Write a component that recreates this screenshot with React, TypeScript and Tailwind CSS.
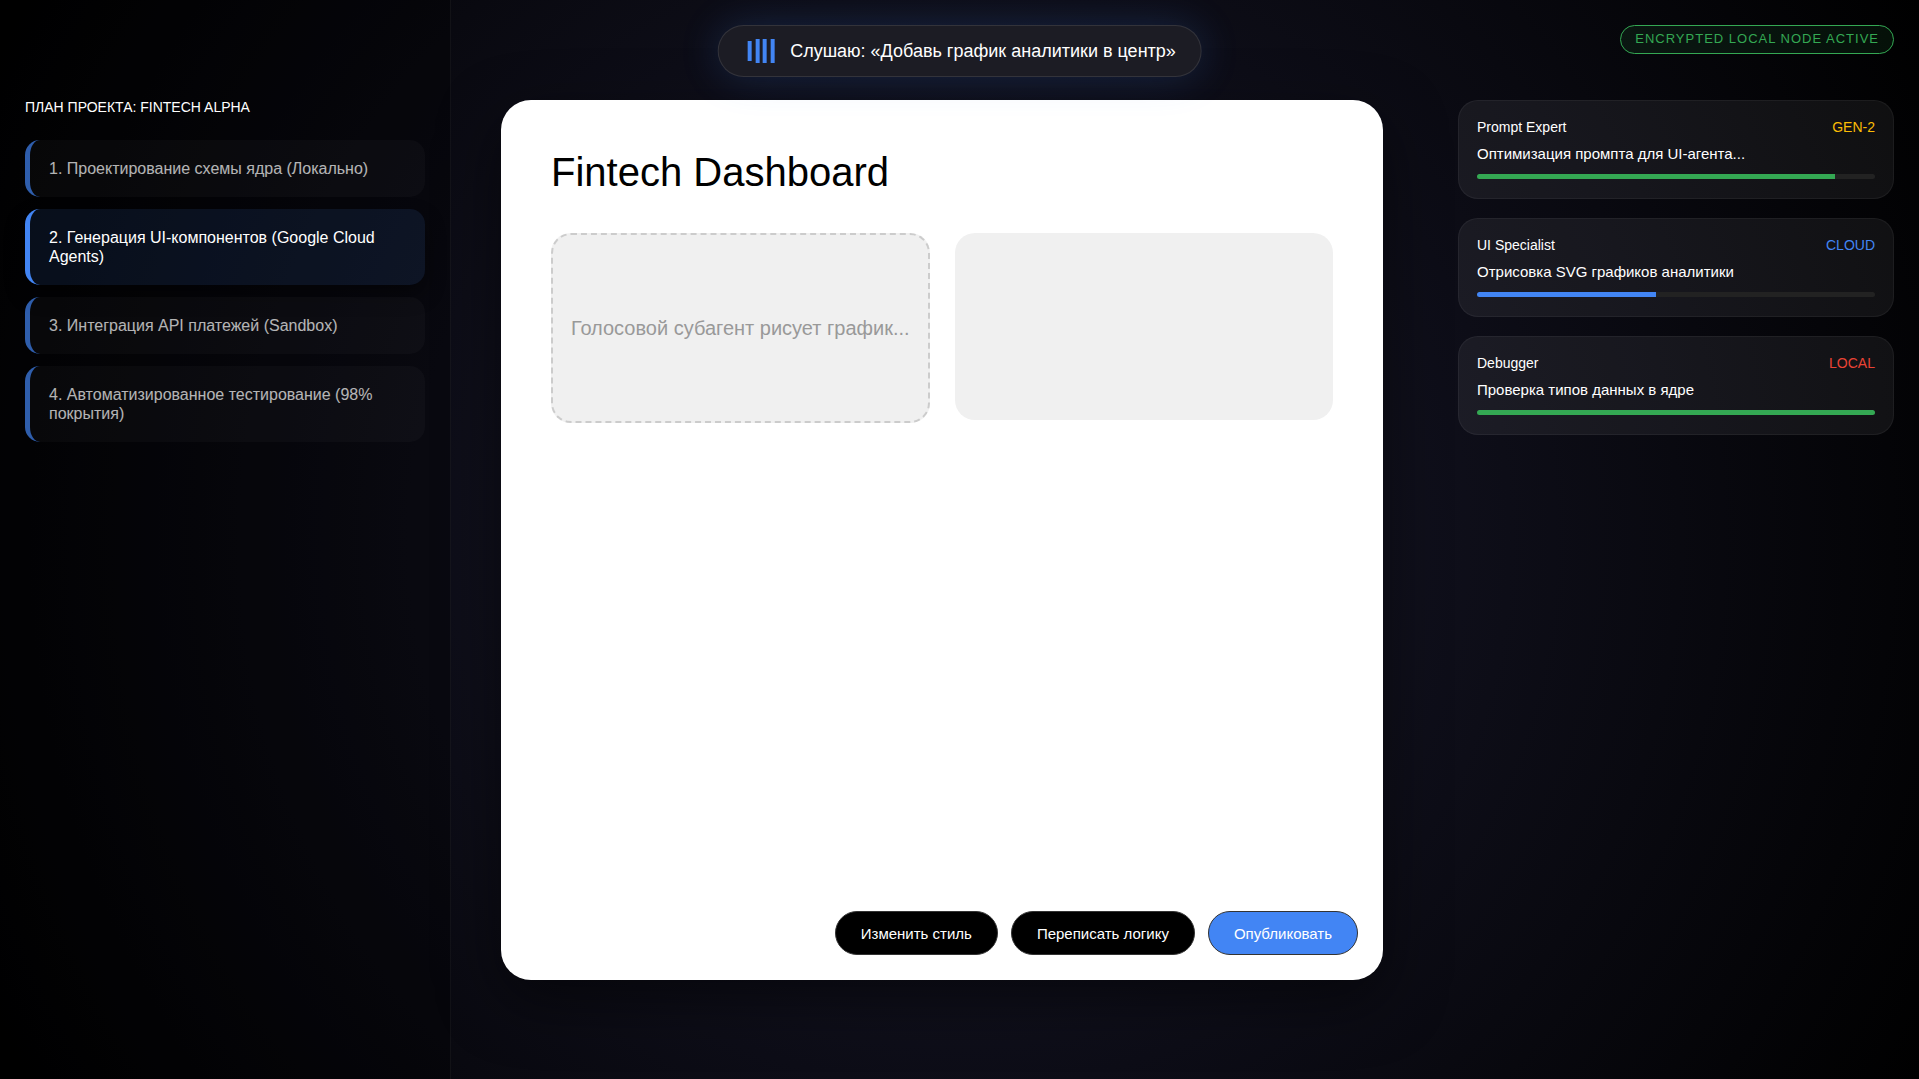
import React from 'react'

const steps = [
  { text: '1. Проектирование схемы ядра (Локально)', active: false },
  { text: '2. Генерация UI-компонентов (Google Cloud Agents)', active: true },
  { text: '3. Интеграция API платежей (Sandbox)', active: false },
  { text: '4. Автоматизированное тестирование (98% покрытия)', active: false },
]

const agents = [
  { name: 'Prompt Expert', tag: 'GEN-2', tagColor: 'text-[#fbbc05]', task: 'Оптимизация промпта для UI-агента...', progress: 90, bar: 'bg-[#34a853]' },
  { name: 'UI Specialist', tag: 'CLOUD', tagColor: 'text-[#4285f4]', task: 'Отрисовка SVG графиков аналитики', progress: 45, bar: 'bg-[#4285f4]' },
  { name: 'Debugger', tag: 'LOCAL', tagColor: 'text-[#ea4335]', task: 'Проверка типов данных в ядре', progress: 100, bar: 'bg-[#34a853]' },
]

function Wave() {
  return (
    <svg width="32" height="24" viewBox="0 0 32 24" fill="#4285f4" aria-hidden="true">
      <rect x="4" y="2" width="4" height="20" />
      <rect x="12" y="0" width="4" height="24" />
      <rect x="19" y="0" width="4" height="24" />
      <rect x="27" y="0" width="4" height="24" />
    </svg>
  )
}

export default function App() {
  return (
    <div className="relative min-h-screen flex text-white bg-black bg-[radial-gradient(circle_at_center,#1a1a2e_0%,#000000_100%)] font-['Liberation_Sans',Arial,sans-serif]">
      {/* План проекта */}
      <aside className="w-[451px] shrink-0 px-[25px] pt-[100px] bg-black/30 border-r border-white/5">
        <h3 className="text-[14px] leading-[14px] mb-[26px] uppercase">План проекта: Fintech Alpha</h3>
        <ul className="flex flex-col gap-3">
          {steps.map((step) => (
            <li
              key={step.text}
              className={
                step.active
                  ? 'rounded-[15px] border-l-[5px] border-[#4285f4] p-[19px] text-[16px] leading-[19px] bg-[#4285f4]/10 shadow-[0_10px_20px_rgba(0,0,0,0.4)]'
                  : 'rounded-[15px] border-l-[5px] border-[#4285f4] p-[19px] text-[16px] leading-[19px] bg-white/[0.04] opacity-70'
              }
            >
              {step.text}
            </li>
          ))}
        </ul>
      </aside>

      {/* Холст */}
      <main className="flex-1 min-w-0 px-[50px] pt-[100px] pb-[99px] flex">
        <section className="flex-1 flex flex-col rounded-[30px] bg-white text-black p-[25px] shadow-[0_20px_60px_rgba(0,0,0,0.5)]">
          <div className="p-[25px] flex-1">
            <h1 className="text-[40px] leading-[44px] mb-[39px]">Fintech Dashboard</h1>
            <div className="grid grid-cols-2 gap-[25px] items-start">
              <div className="h-[190px] rounded-[20px] border-2 border-dashed border-[#cccccc] bg-[#f0f0f0] flex items-center justify-center text-[20px] leading-[24px] text-[#999999]">
                Голосовой субагент рисует график...
              </div>
              <div className="h-[187px] rounded-[20px] bg-[#f0f0f0]" />
            </div>
          </div>
          <div className="flex justify-end gap-[13px] text-[15px] leading-[18px] text-white">
            <button className="rounded-[22px] border border-[#333333] bg-black px-[25px] pt-[13px] pb-[11px]">Изменить стиль</button>
            <button className="rounded-[22px] border border-[#333333] bg-black px-[25px] pt-[13px] pb-[11px]">Переписать логику</button>
            <button className="rounded-[22px] border border-[#333333] bg-[#4285f4] px-[25px] pt-[13px] pb-[11px]">Опубликовать</button>
          </div>
        </section>
      </main>

      {/* Агенты */}
      <aside className="w-[486px] shrink-0 px-[25px] pt-[100px] flex flex-col gap-[19px]">
        {agents.map((agent) => (
          <div key={agent.name} className="rounded-[20px] border border-white/5 bg-white/[0.06] px-[18px] pt-[18px] pb-[19px]">
            <div className="flex justify-between text-[14px] leading-[16px]">
              <span>{agent.name}</span>
              <span className={agent.tagColor}>{agent.tag}</span>
            </div>
            <p className="mt-[10px] text-[15px] leading-[18px]">{agent.task}</p>
            <div className="mt-[11px] h-[5px] rounded-full bg-[#222222] overflow-hidden">
              <div className={`h-full ${agent.bar}`} style={{ width: `${agent.progress}%` }} />
            </div>
          </div>
        ))}
      </aside>

      {/* Голосовой статус поверх холста */}
      <div className="absolute top-[25px] left-1/2 -translate-x-1/2 h-[52px] px-[25px] flex items-center gap-[15px] rounded-full border border-white/10 bg-[#1c1c24] shadow-[0_0_40px_rgba(66,133,244,0.2)] text-[18px] leading-[20px] whitespace-nowrap">
        <Wave />
        <span>Слушаю: «Добавь график аналитики в центр»</span>
      </div>

      <div className="absolute top-[25px] right-[25px] px-[14px] pt-[5px] pb-[7px] rounded-full border border-[#34a853] bg-[#34a853]/10 text-[#34a853] text-[13px] leading-[15px] tracking-[1px]">
        ENCRYPTED LOCAL NODE ACTIVE
      </div>
    </div>
  )
}
